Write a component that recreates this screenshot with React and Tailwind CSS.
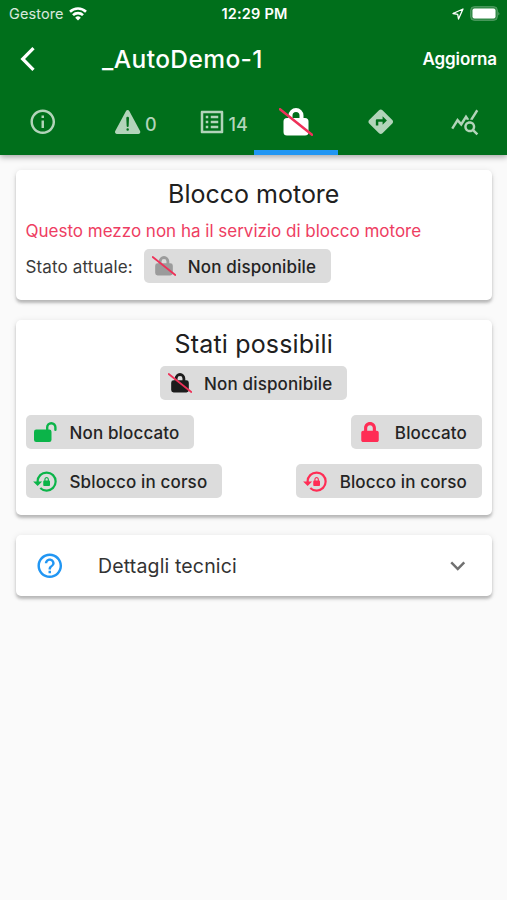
import React, { useState } from 'react';
import {
  MdInfoOutline,
  MdListAlt,
  MdDirections,
  MdQueryStats,
  MdHelpOutline,
  MdLockReset,
  MdExpandMore,
} from 'react-icons/md';
import { FaLock } from 'react-icons/fa';
import { IoWarning } from 'react-icons/io5';

// Lucchetto sbarrato: icona piena con una linea rossa sopra
const SlashedLock = ({ className }) => (
  <svg viewBox="0 0 34 28" className={className}>
    <path
      fill="currentColor"
      d="M9.500 10V7.500a7.500 7.500 0 0 1 15 0V10h1.500a3.500 3.500 0 0 1 3.500 3.500v10.500a3.500 3.500 0 0 1-3.500 3.500h-18a3.500 3.500 0 0 1-3.500-3.500v-10.500A3.500 3.500 0 0 1 8 10ZM13.500 10h7V7.500a3.500 3.500 0 0 0-7 0Z"
    />
    <path d="M1 1.200 33 26.800" stroke="#ee3158" strokeWidth="2.500" strokeLinecap="round" />
  </svg>
);

const OpenLock = ({ className }) => (
  <svg viewBox="0 0 23 20" className={className}>
    <rect x="0" y="7.500" width="17.500" height="12.500" rx="2.200" fill="currentColor" />
    <path d="M13.200 9V5.300a4.100 4.100 0 0 1 8.200 0v2.500" fill="none" stroke="currentColor" strokeWidth="2.400" strokeLinecap="round" />
  </svg>
);

const StatusBar = () => (
  <div className="grid grid-cols-3 items-center h-[27px] pl-[9px] pr-[7px] text-white">
    <div className="flex items-center gap-[6px]">
      <span className="text-[14.5px] tracking-[0.1px] text-white/85">Gestore</span>
      <svg viewBox="0 0 18 14" className="w-[18px] h-[14px] -ml-px" fill="none" stroke="currentColor" strokeWidth="2.600">
        <path d="M1 4.800a11.500 11.500 0 0 1 16 0" />
        <path d="M4 8.200a7 7 0 0 1 10 0" />
        <path d="M9 13.600 6.200 10.700a4 4 0 0 1 5.600 0Z" fill="currentColor" stroke="none" />
      </svg>
    </div>
    <span className="text-[14.5px] font-semibold tracking-[0.2px] text-center whitespace-nowrap">12:29 PM</span>
    <div className="flex items-center justify-end gap-[6px]">
      <svg viewBox="0 0 12 12" className="w-3 h-3" fill="none" stroke="currentColor" strokeWidth="1.300" strokeLinejoin="round">
        <path d="M11 1 1 5.500l4.700.800L6.500 11Z" />
      </svg>
      <svg viewBox="0 0 30 15" className="w-[30px] h-[15px]">
        <rect x=".5" y=".5" width="27" height="14" rx="4" fill="#fff" fillOpacity=".2" stroke="#fff" strokeOpacity=".2" />
        <rect x="2.500" y="2.500" width="23" height="10" rx="2" fill="#fff" />
        <path d="M28.500 5.500q1.500 2 0 4Z" fill="#fff" fillOpacity=".5" />
      </svg>
    </div>
  </div>
);

const tabs = [
  { id: 'info', icon: <MdInfoOutline /> },
  { id: 'avvisi', icon: <IoWarning className="-mx-[1px] text-[32px]" />, count: '0' },
  { id: 'eventi', icon: <MdListAlt className="ml-[6px] text-[30px]" />, count: '14' },
  { id: 'blocco', icon: <SlashedLock className="w-[34px] h-7" /> },
  { id: 'percorso', icon: <MdDirections /> },
  { id: 'statistiche', icon: <MdQueryStats /> },
];

const Chip = ({ icon, label }) => (
  <div className="flex items-center h-[34px] pl-[7px] pr-[15px] rounded-[5px] bg-[#dcdcdc]">
    <span className="flex items-center w-[37px]">{icon}</span>
    <span className="mt-[2px] text-[17px] leading-[22px] font-medium tracking-[0.14px] text-[#242424] whitespace-nowrap">{label}</span>
  </div>
);

const Card = ({ className, children }) => (
  <section className={`bg-white rounded-[5px] shadow-[0_3px_3px_rgba(0,0,0,0.22),0_1px_6px_rgba(0,0,0,0.1)] ${className}`}>
    {children}
  </section>
);

const App = () => {
  const [activeTab, setActiveTab] = useState('blocco');

  return (
    <div className="min-h-screen bg-[#fafafa] font-['Inter',sans-serif]">
      <header className="bg-[#006f1b] text-white shadow-[0_2px_6px_rgba(0,0,0,0.35)]">
        <StatusBar />
        <div className="flex items-center h-[64px] pl-5 pr-[10px]">
          <svg viewBox="0 0 15 24" className="w-[15px] h-6" fill="none" stroke="currentColor" strokeWidth="3.200">
            <path d="M13.500 1.200 2.700 12l10.800 10.800" />
          </svg>
          <h1 className="flex-1 ml-[67px] text-[24.5px] font-medium tracking-[0.4px] whitespace-nowrap">_AutoDemo-1</h1>
          <button className="mt-[2px] text-[17px] font-semibold tracking-[-0.1px]">Aggiorna</button>
        </div>
        <nav className="grid grid-cols-6 h-[64px]">
          {tabs.map((tab) => (
            <button
              key={tab.id}
              onClick={() => setActiveTab(tab.id)}
              className={`flex items-center justify-center text-[29.5px] border-b-[5px] pt-[3px] ${
                activeTab === tab.id ? 'border-[#2196f3] text-white' : 'border-transparent text-[#b2d4ba]'
              } ${tab.count ? 'pl-4' : ''}`}
            >
              {tab.icon}
              {tab.count && <span className="ml-[2px] mt-[6px] text-[18px] font-medium leading-none">{tab.count}</span>}
            </button>
          ))}
        </nav>
      </header>

      <main className="flex flex-col gap-5 pl-[15.500px] pr-[15px] pt-[15px]">
        <Card className="h-[130px] px-[10px] pt-[7px]">
          <h2 className="text-[25px] leading-[35px] tracking-[0px] text-center text-[#202020]">Blocco motore</h2>
          <p className="mt-[6px] text-[17px] leading-[26px] tracking-[0px] text-[#ee3d62] whitespace-nowrap">
            Questo mezzo non ha il servizio di blocco motore
          </p>
          <div className="flex items-center gap-[11px] mt-[5px]">
            <span className="mt-[2px] text-[17px] leading-[22px] tracking-[0.15px] text-[#3a3a3a]">Stato attuale:</span>
            <Chip icon={<SlashedLock className="ml-[1px] w-6 h-5 text-[#9b9b9b]" />} label="Non disponibile" />
          </div>
        </Card>

        <Card className="h-[195px] px-[10px] pt-[7px]">
          <h2 className="text-[25px] leading-[35px] tracking-[0.18px] text-center text-[#202020]">Stati possibili</h2>
          <div className="flex justify-center mt-1">
            <Chip icon={<SlashedLock className="ml-[1px] w-6 h-5 text-[#1c1c1c]" />} label="Non disponibile" />
          </div>
          <div className="flex justify-between mt-[15px]">
            <Chip icon={<OpenLock className="ml-[1px] w-[23px] h-5 text-[#0bb449]" />} label="Non bloccato" />
            <Chip icon={<FaLock className="ml-[3px] w-[18px] h-5 text-[#ff2d55]" />} label="Bloccato" />
          </div>
          <div className="flex justify-between mt-[15px]">
            <Chip icon={<MdLockReset className="text-[27px] -ml-px text-[#0bb449]" />} label="Sblocco in corso" />
            <Chip icon={<MdLockReset className="text-[27px] -ml-px text-[#ff2d55]" />} label="Blocco in corso" />
          </div>
        </Card>

        <Card className="flex items-center h-[61px] pl-[19px] pr-5">
          <MdHelpOutline className="text-[29.5px] text-[#2196f3]" />
          <span className="flex-1 ml-[34px] mt-[2px] text-[19.5px] tracking-[0.15px] text-[#333]">Dettagli tecnici</span>
          <MdExpandMore className="text-[29.5px] text-[#707070]" />
        </Card>
      </main>
    </div>
  );
};

export default App;
